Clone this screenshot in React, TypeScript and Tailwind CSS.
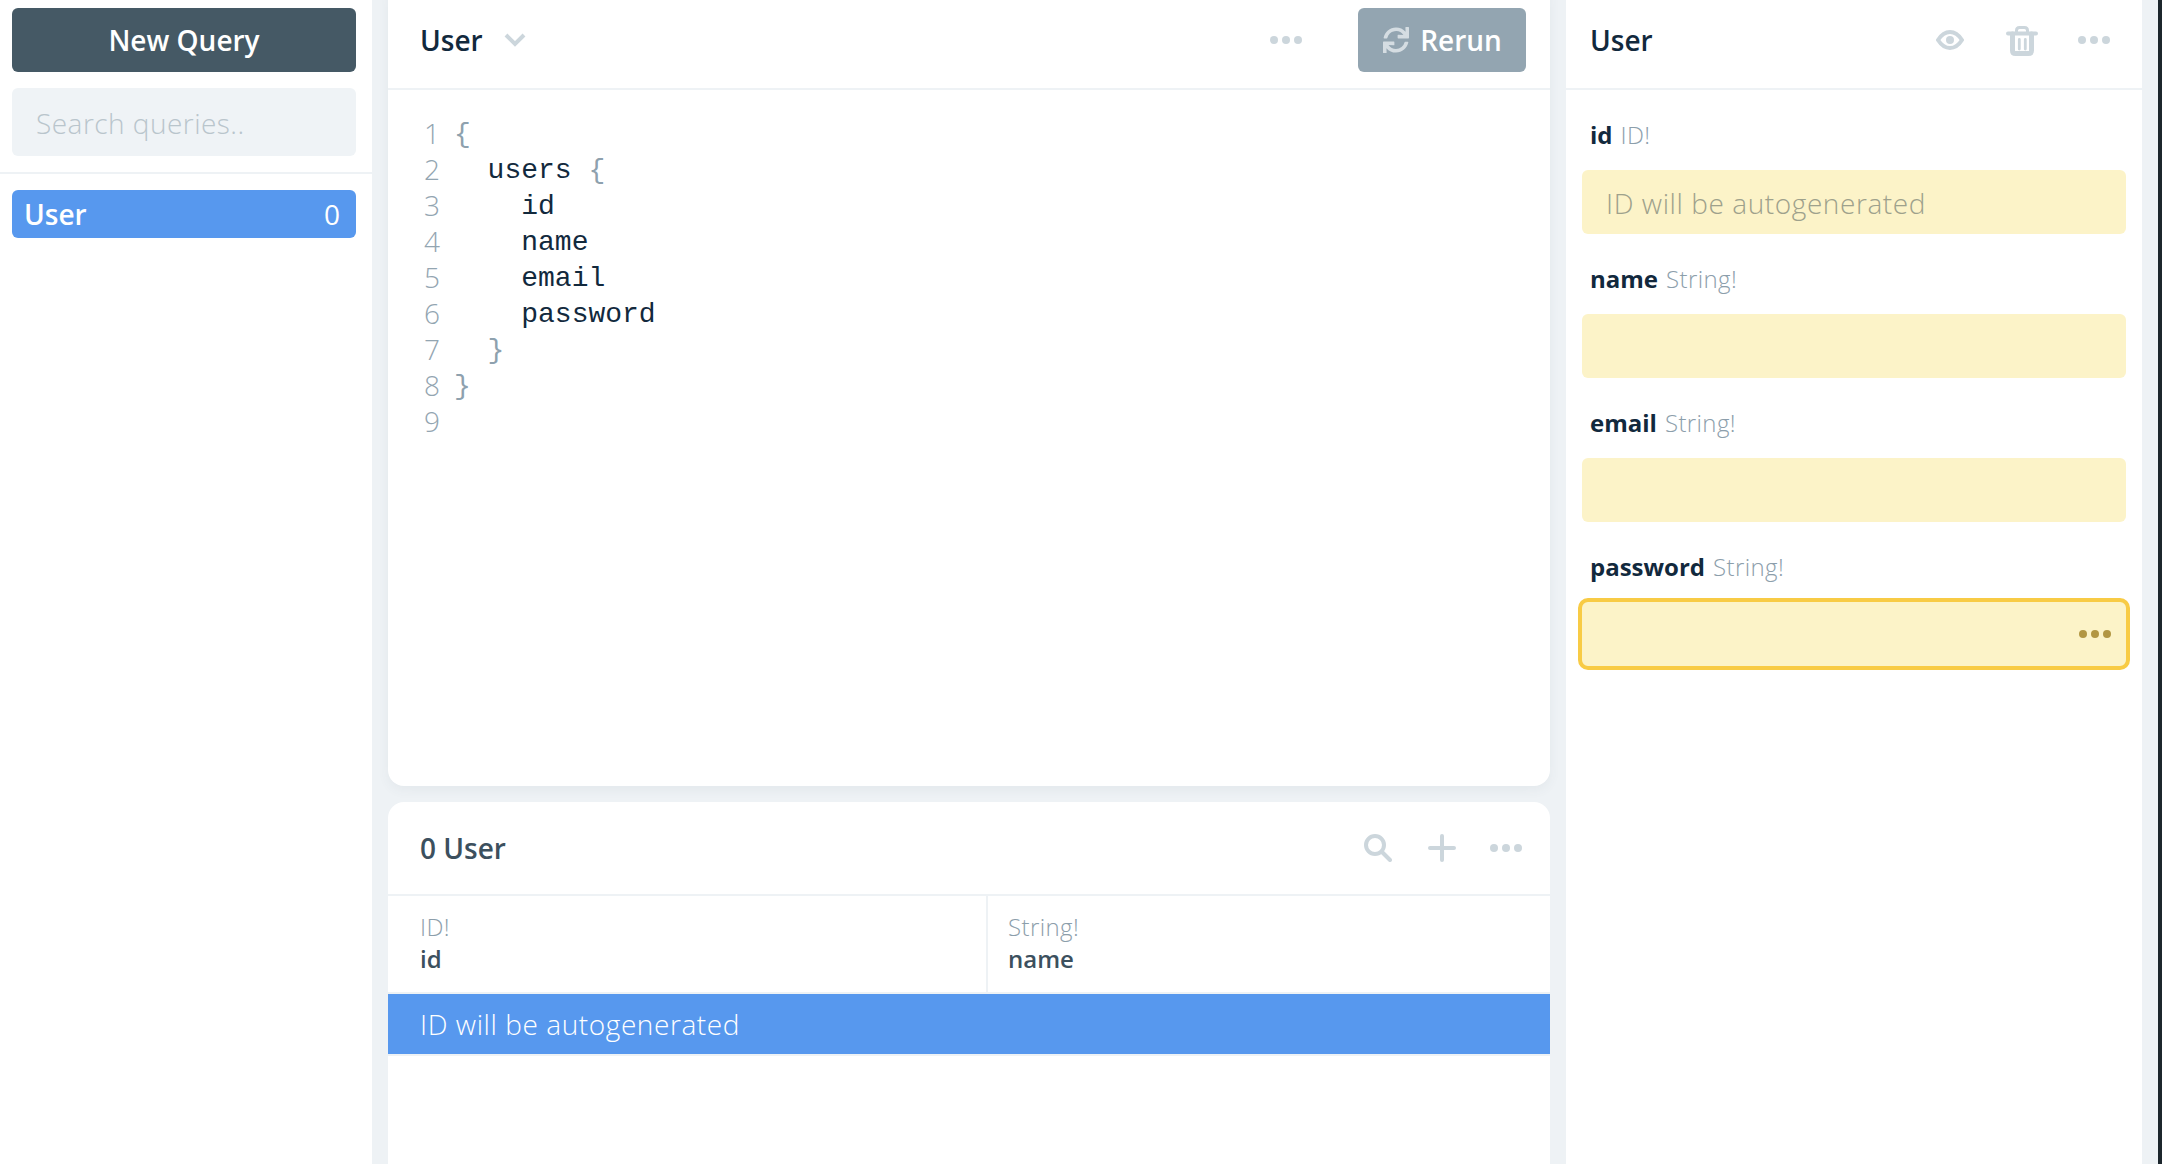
import React from "react";
import { FaSync } from "react-icons/fa";

const Dots = ({ className = "fill-[#ccd6dc]" }: { className?: string }) => (
  <svg width="32" height="8" viewBox="0 0 32 8" className={className}>
    <circle cx="4" cy="4" r="4" />
    <circle cx="16" cy="4" r="4" />
    <circle cx="28" cy="4" r="4" />
  </svg>
);

const Field = ({ name, type, placeholder }: { name: string; type: string; placeholder?: string }) => (
  <div className="flex flex-col">
    <div className="h-[36px] pl-[8px] text-[24px] leading-[36px] whitespace-nowrap">
      <span className="font-bold text-[#12293d]">{name}</span>
      <span className="ml-[8px] font-[350] tracking-[0.4px] text-[#8c9eab]">{type}</span>
    </div>
    <div className="mt-[17px] h-[64px] rounded-[6px] bg-[#fcf3c8] px-[24px] text-[28px] leading-[66px] font-[350] tracking-[0.58px] text-[#9ea18c]">
      {placeholder}
    </div>
  </div>
);

const code: [string, string, string][] = [
  ["1", "", "{"],
  ["2", "  ", "users"],
  ["3", "    ", "id"],
  ["4", "    ", "name"],
  ["5", "    ", "email"],
  ["6", "    ", "password"],
  ["7", "  ", "}"],
  ["8", "", "}"],
  ["9", "", ""],
];

export default function App() {
  return (
    <div className="flex h-[1164px] w-[2162px] overflow-hidden bg-[#eef2f5] font-['Open_Sans',sans-serif]">
      <aside className="-mt-[20px] flex w-[372px] shrink-0 flex-col rounded-tr-[16px] bg-white pt-[20px]">
        <div className="flex flex-col gap-[16px] border-b-2 border-[#eef2f5] pl-[12px] pr-[16px] pt-[8px] pb-[16px]">
          <div className="flex h-[64px] items-center justify-center rounded-[6px] bg-[#455965] text-[28px] font-semibold text-white">
            New Query
          </div>
          <div className="flex h-[68px] items-center rounded-[6px] bg-[#eff3f6] px-[24px] pt-[2px] text-[28px] font-[350] tracking-[0.47px] text-[#b9c5cc]">
            Search queries..
          </div>
        </div>
        <div className="pl-[12px] pr-[16px] pt-[16px]">
          <div className="flex h-[48px] items-center justify-between rounded-[6px] bg-[#5798ee] px-[12px] text-[28px] text-white">
            <span className="font-semibold">User</span>
            <span className="pr-[4px] font-normal">0</span>
          </div>
        </div>
      </aside>

      <main className="ml-[16px] flex w-[1162px] shrink-0 flex-col">
        <section className="-mt-[20px] flex h-[806px] shrink-0 flex-col rounded-[16px] bg-white pt-[20px] shadow-[0_4px_12px_rgba(60,80,100,0.06)]">
          <header className="flex h-[90px] shrink-0 items-center border-b-2 border-[#eef2f5] pb-[8px] pl-[32px] pr-[24px]">
            <span className="text-[28px] font-semibold text-[#12293d]">User</span>
            <svg width="22" height="14" viewBox="0 0 22 14" className="ml-[21px] stroke-[#ccd6dc]" fill="none">
              <path d="M2 2l9 9 9-9" strokeWidth="4" />
            </svg>
            <div className="ml-auto mr-[56px]">
              <Dots />
            </div>
            <div className="flex h-[64px] w-[168px] items-center justify-center gap-[11px] rounded-[6px] bg-[#93a5b1] pl-[1px] text-[28px] font-semibold text-white">
              <FaSync className="h-[26px] w-[26px] text-[#d5dde2]" />
              <span>Rerun</span>
            </div>
          </header>
          <div className="pt-[27px] pl-[36px] font-['Liberation_Mono',monospace] text-[28px] leading-[36px]">
            {code.map(([n, indent, text]) => (
              <div key={n} className="flex h-[36px]">
                <span className="w-[30px] -translate-y-[2px] font-['Open_Sans',sans-serif] font-light text-[#93a5b1]">{n}</span>
                <pre className="font-['Liberation_Mono',monospace] text-[#12293d]">
                  {indent}
                  {text === "{" || text === "}" ? (
                    <span className="text-[#8ea1ae]">{text}</span>
                  ) : (
                    text
                  )}
                  {text === "users" && <span className="text-[#8ea1ae]"> {"{"}</span>}
                </pre>
              </div>
            ))}
          </div>
        </section>

        <section className="mt-[16px] flex flex-1 flex-col rounded-t-[16px] bg-white">
          <header className="flex h-[94px] shrink-0 items-center justify-between border-b-2 border-[#eef2f5] pl-[32px] pr-[28px]">
            <span className="text-[28px] font-semibold text-[#3c505e]">0 User</span>
            <div className="flex items-center">
              <svg width="28" height="28" viewBox="0 0 28 28" fill="none" className="stroke-[#ccd6dc]" strokeWidth="4" strokeLinecap="round">
                <circle cx="11" cy="11" r="9" />
                <path d="M18 18l8 8" />
              </svg>
              <svg width="28" height="28" viewBox="0 0 28 28" fill="none" className="ml-[36px] stroke-[#ccd6dc]" strokeWidth="4" strokeLinecap="round">
                <path d="M14 2v24M2 14h24" />
              </svg>
              <div className="ml-[34px]">
                <Dots />
              </div>
            </div>
          </header>
          <div className="flex h-[98px] shrink-0 border-b-2 border-[#eef2f5]">
            <div className="flex w-[600px] flex-col border-r-2 border-[#eef2f5] pl-[32px] pt-[15px]">
              <span className="text-[24px] leading-[32px] font-[350] tracking-[0.4px] text-[#8c9eab]">ID!</span>
              <span className="text-[24px] leading-[32px] font-semibold text-[#3c505e]">id</span>
            </div>
            <div className="flex flex-1 flex-col pl-[20px] pt-[15px]">
              <span className="text-[24px] leading-[32px] font-[350] tracking-[0.4px] text-[#8c9eab]">String!</span>
              <span className="text-[24px] leading-[32px] font-semibold text-[#3c505e]">name</span>
            </div>
          </div>
          <div className="h-[62px] shrink-0 border-b-2 border-[#eef2f5] bg-[#5798ee] pl-[32px] text-[28px] leading-[60px] font-[350] tracking-[0.58px] text-white">
            ID will be autogenerated
          </div>
        </section>
      </main>

      <aside className="-mt-[20px] ml-[16px] flex w-[576px] shrink-0 flex-col rounded-t-[16px] bg-white pt-[20px]">
        <header className="flex h-[90px] shrink-0 items-center border-b-2 border-[#eef2f5] pb-[8px] pl-[24px] pr-[32px]">
          <span className="text-[28px] font-semibold text-[#12293d]">User</span>
          <svg width="28" height="20" viewBox="0 0 28 20" className="ml-auto" fill="none">
            <path d="M2 10C5.500 4.500 9.500 2 14 2S22.500 4.500 26 10C22.500 15.500 18.500 18 14 18S5.500 15.500 2 10Z" stroke="#ccd6dc" strokeWidth="4" />
            <circle cx="14" cy="10" r="4" fill="#ccd6dc" />
          </svg>
          <svg width="32" height="30" viewBox="0 0 32 30" className="ml-[42px] mt-[2px]" fill="none" stroke="#ccd6dc" strokeLinecap="round">
            <path d="M2 7.500h28" strokeWidth="4" />
            <path d="M10.500 6V4.500C10.500 2.500 12 1.500 13.500 1.500h5c1.500 0 3 1 3 3V6" strokeWidth="3" />
            <path d="M6.500 8v16.500c0 2 1 3 3 3h13c2 0 3-1 3-3V8" strokeWidth="5" />
            <path d="M13.300 13.500v9.500M19.300 13.500v9.500" strokeWidth="2.800" />
          </svg>
          <div className="ml-[40px]">
            <Dots />
          </div>
        </header>
        <div className="flex flex-col gap-[27px] px-[16px] pt-[27px]">
          <Field name="id" type="ID!" placeholder="ID will be autogenerated" />
          <Field name="name" type="String!" />
          <Field name="email" type="String!" />
          <div className="flex flex-col">
            <div className="h-[36px] pl-[8px] text-[24px] leading-[36px] whitespace-nowrap">
              <span className="font-bold text-[#12293d]">password</span>
              <span className="ml-[8px] font-[350] tracking-[0.4px] text-[#8c9eab]">String!</span>
            </div>
            <div className="-mx-[4px] mt-[13px] flex h-[72px] items-center justify-end rounded-[10px] border-4 border-[#f8cb45] bg-[#fcf3c8] pr-[15px]">
              <Dots className="fill-[#b29642]" />
            </div>
          </div>
        </div>
      </aside>
      <div className="ml-[16px] w-[4px] shrink-0 bg-[#1c262c]" />
    </div>
  );
}
